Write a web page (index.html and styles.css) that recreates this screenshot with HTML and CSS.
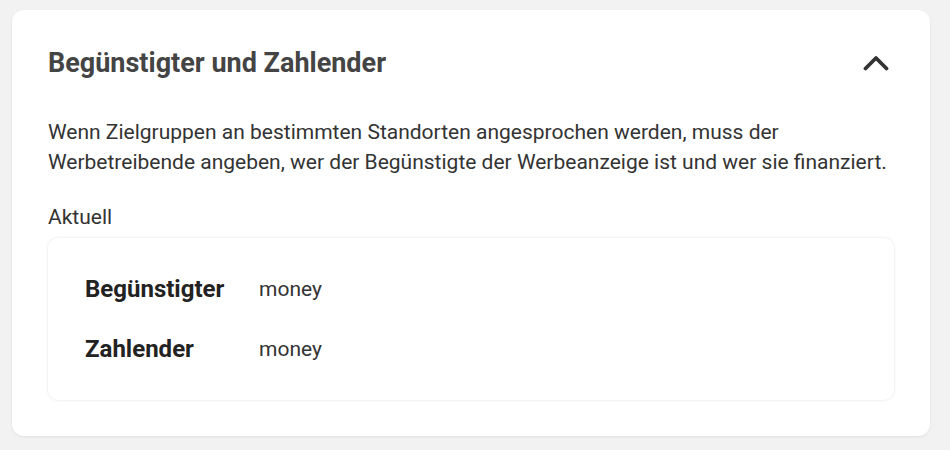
FILE: index.html
```html
<!DOCTYPE html>
<html>
<head>
    <title>Begünstigter und Zahlender</title>
    <link rel="stylesheet" href="styles.css">
</head>
<body>
    <div class="card">
        <div class="card-header">
            <h2 class="card-title">Begünstigter und Zahlender</h2>
            <button class="toggle" aria-label="Einklappen">
                <svg width="26" height="16" viewBox="0 0 26 16">
                    <path d="M2.5 13.5 L13 3 L23.5 13.5" fill="none" stroke="#333" stroke-width="3.8" stroke-linecap="round" stroke-linejoin="round"/>
                </svg>
            </button>
        </div>
        <p class="desc">Wenn Zielgruppen an bestimmten Standorten angesprochen werden, muss der Werbetreibende angeben, wer der Begünstigte der Werbeanzeige ist und wer sie finanziert.</p>
        <div class="current-label">Aktuell</div>
        <div class="info-box">
            <div class="info-row">
                <span class="info-key">Begünstigter</span>
                <span class="info-value">money</span>
            </div>
            <div class="info-row">
                <span class="info-key">Zahlender</span>
                <span class="info-value">money</span>
            </div>
        </div>
    </div>
</body>
</html>
```

FILE: styles.css
```css
body {
    margin: 0;
    padding: 10px 20px 14px 12px;
    background-color: #f2f2f2;
    font-family: Roboto, "Liberation Sans", sans-serif;
    color: #333;
}

.card {
    background-color: #fff;
    border-radius: 12px;
    box-shadow: 0 1px 3px rgba(0, 0, 0, 0.08);
    padding: 35px 36px 36px 36px;
}

.card-header {
    display: flex;
    align-items: center;
    justify-content: space-between;
    height: 36px;
}

.card-title {
    margin: 0;
    font-size: 27px;
    font-weight: 700;
    color: #444;
}

.toggle {
    border: none;
    background: none;
    padding: 0;
    margin-right: 5px;
    display: flex;
    cursor: pointer;
}

.desc {
    margin: 36px 0 0 0;
    font-size: 21px;
    line-height: 30px;
    color: #333;
}

.current-label {
    margin-top: 25px;
    font-size: 21px;
    line-height: 30px;
}

.info-box {
    margin-top: 6px;
    border-radius: 10px;
    box-shadow: 0 0 3px rgba(0, 0, 0, 0.12);
    padding: 33px 37px;
    display: flex;
    flex-direction: column;
    gap: 24px;
}

.info-row {
    display: flex;
    align-items: center;
    height: 36px;
}

.info-key {
    width: 174px;
    font-size: 24px;
    font-weight: 700;
    color: #222;
}

.info-value {
    font-size: 21px;
    color: #333;
}
```
